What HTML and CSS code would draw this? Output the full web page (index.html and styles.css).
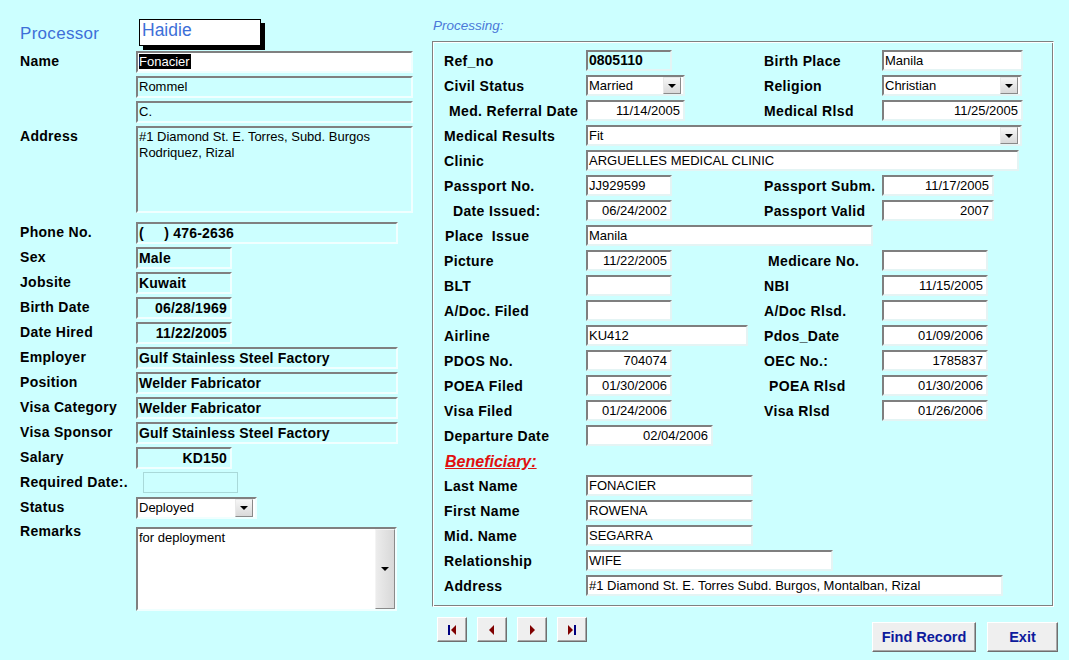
FILE: index.html
```html
<!DOCTYPE html>
<html>
<head>
<meta charset="utf-8">
<title>Processing</title>
<link rel="stylesheet" href="styles.css">
</head>
<body>
<div class="window">
  <div class="left">
    <div class="proc-row">
      <div class="proc-label">Processor</div>
      <div class="proc-box">Haidie</div>
    </div>
    <div class="row"><div class="lbl">Name</div><div class="fld w277 white"><span class="hl">Fonacier</span></div></div>
    <div class="row"><div class="lbl"></div><div class="fld w277">Rommel</div></div>
    <div class="row"><div class="lbl"></div><div class="fld w277">C.</div></div>
    <div class="row addr"><div class="lbl top">Address</div><div class="fld w277 area">#1 Diamond St. E. Torres, Subd. Burgos
Rodriquez, Rizal</div></div>
    <div class="row"><div class="lbl">Phone No.</div><div class="fld w262 b">(     ) 476-2636</div></div>
    <div class="row"><div class="lbl">Sex</div><div class="fld w96 b">Male</div></div>
    <div class="row"><div class="lbl">Jobsite</div><div class="fld w96 b">Kuwait</div></div>
    <div class="row"><div class="lbl">Birth Date</div><div class="fld w96 b r">06/28/1969</div></div>
    <div class="row"><div class="lbl">Date Hired</div><div class="fld w96 b r">11/22/2005</div></div>
    <div class="row"><div class="lbl">Employer</div><div class="fld w262 b">Gulf Stainless Steel Factory</div></div>
    <div class="row"><div class="lbl">Position</div><div class="fld w262 b">Welder Fabricator</div></div>
    <div class="row"><div class="lbl">Visa Category</div><div class="fld w262 b">Welder Fabricator</div></div>
    <div class="row"><div class="lbl">Visa Sponsor</div><div class="fld w262 b">Gulf Stainless Steel Factory</div></div>
    <div class="row"><div class="lbl">Salary</div><div class="fld w96 b r">KD150</div></div>
    <div class="row"><div class="lbl">Required Date:.</div><div class="flat"></div></div>
    <div class="row status"><div class="lbl">Status</div><div class="fld w121 white combo"><span class="ctext">Deployed</span><span class="dd"></span></div></div>
    <div class="row remarks"><div class="lbl top2">Remarks</div><div class="fld w261 white memo"><span class="mtext">for deployment</span><span class="sbtn"></span></div></div>
  </div>

  <div class="right">
    <div class="ptitle">Processing:</div>
    <div class="group">
      <div class="rrow"><div class="rl">Ref_no</div><div class="in w86 cy bold">0805110</div><div class="rl">Birth Place</div><div class="in w141">Manila</div></div>
      <div class="rrow"><div class="rl">Civil Status</div><div class="in w99 combo"><span class="ctext">Married</span><span class="dd"></span></div><div class="rl">Religion</div><div class="in w140 combo"><span class="ctext">Christian</span><span class="dd"></span></div></div>
      <div class="rrow"><div class="rl i5">Med. Referral Date</div><div class="in w99 r">11/14/2005</div><div class="rl">Medical Rlsd</div><div class="in w141 r">11/25/2005</div></div>
      <div class="rrow"><div class="rl">Medical Results</div><div class="in w436 combo span"><span class="ctext">Fit</span><span class="dd"></span></div></div>
      <div class="rrow"><div class="rl">Clinic</div><div class="in w433 span">ARGUELLES MEDICAL CLINIC</div></div>
      <div class="rrow"><div class="rl">Passport No.</div><div class="in w86">JJ929599</div><div class="rl">Passport Subm.</div><div class="in w112 r">11/17/2005</div></div>
      <div class="rrow"><div class="rl i9">Date Issued:</div><div class="in w86 r">06/24/2002</div><div class="rl">Passport Valid</div><div class="in w112 r">2007</div></div>
      <div class="rrow"><div class="rl i1">Place  Issue</div><div class="in w287 span">Manila</div></div>
      <div class="rrow"><div class="rl">Picture</div><div class="in w86 r">11/22/2005</div><div class="rl i4">Medicare No.</div><div class="in w106"></div></div>
      <div class="rrow"><div class="rl">BLT</div><div class="in w86"></div><div class="rl">NBI</div><div class="in w106 r">11/15/2005</div></div>
      <div class="rrow"><div class="rl">A/Doc. Filed</div><div class="in w86"></div><div class="rl">A/Doc Rlsd.</div><div class="in w106"></div></div>
      <div class="rrow"><div class="rl">Airline</div><div class="in w162">KU412</div><div class="rl">Pdos_Date</div><div class="in w106 r">01/09/2006</div></div>
      <div class="rrow"><div class="rl">PDOS No.</div><div class="in w86 r">704074</div><div class="rl">OEC No.:</div><div class="in w106 r">1785837</div></div>
      <div class="rrow"><div class="rl">POEA Filed</div><div class="in w86 r">01/30/2006</div><div class="rl i5">POEA Rlsd</div><div class="in w106 r">01/30/2006</div></div>
      <div class="rrow"><div class="rl">Visa Filed</div><div class="in w86 r">01/24/2006</div><div class="rl">Visa Rlsd</div><div class="in w106 r">01/26/2006</div></div>
      <div class="rrow"><div class="rl">Departure Date</div><div class="in w127 r">02/04/2006</div></div>
      <div class="rrow"><div class="ben">Beneficiary:</div></div>
      <div class="rrow"><div class="rl">Last Name</div><div class="in w167">FONACIER</div></div>
      <div class="rrow"><div class="rl">First Name</div><div class="in w167">ROWENA</div></div>
      <div class="rrow"><div class="rl">Mid. Name</div><div class="in w167">SEGARRA</div></div>
      <div class="rrow"><div class="rl">Relationship</div><div class="in w247 span">WIFE</div></div>
      <div class="rrow"><div class="rl">Address</div><div class="in w417 span">#1 Diamond St. E. Torres Subd. Burgos, Montalban, Rizal</div></div>
    </div>
    <div class="bottom">
      <div class="nav">
        <div class="btn nbtn"><svg width="9" height="10" viewBox="0 0 9 10"><rect x="0" y="0" width="2" height="10" fill="#000080"/><path d="M8 0L3 5L8 10Z" fill="#800000"/></svg></div>
        <div class="btn nbtn"><svg width="6" height="10" viewBox="0 0 6 10"><path d="M5 0L0 5L5 10Z" fill="#800000"/></svg></div>
        <div class="btn nbtn"><svg width="6" height="10" viewBox="0 0 6 10"><path d="M1 0L6 5L1 10Z" fill="#800000"/></svg></div>
        <div class="btn nbtn"><svg width="9" height="10" viewBox="0 0 9 10"><path d="M0 0L5 5L0 10Z" fill="#800000"/><rect x="6" y="0" width="2" height="10" fill="#000080"/></svg></div>
      </div>
      <div class="actions">
        <div class="btn abtn find">Find Record</div>
        <div class="btn abtn exit">Exit</div>
      </div>
    </div>
  </div>
</div>
</body>
</html>
```

FILE: styles.css
```css
* { box-sizing: border-box; }
html, body { margin: 0; padding: 0; }
body {
  background: #ccffff;
  font-family: "Liberation Sans", Arial, sans-serif;
  color: #000;
}
.window {
  width: 1069px;
  height: 660px;
  display: flex;
  background: #ccffff;
  overflow: hidden;
}

/* ---------- left column ---------- */
.left {
  width: 432px;
  flex: none;
  padding: 19px 0 0 20px;
}
.proc-row {
  display: flex;
  align-items: center;
  height: 27px;
  margin-bottom: 5px;
}
.proc-label {
  width: 119px;
  font-size: 17px;
  letter-spacing: 0.3px;
  color: #3d6fd8;
  padding-top: 2px;
}
.proc-box {
  width: 122px;
  height: 27px;
  background: #fff;
  border: 1px solid #000;
  box-shadow: 4px 4px 0 #000;
  color: #3d6fd8;
  font-size: 17.5px;
  line-height: 20px;
  padding-left: 2px;
}
.row {
  display: flex;
  height: 22px;
  margin-bottom: 3px;
}
.row.addr { height: 87px; margin-bottom: 9px; }
.row.status { margin-bottom: 8px; }
.row.remarks { height: 84px; }
.lbl {
  width: 116px;
  flex: none;
  font-weight: bold;
  font-size: 14px;
  letter-spacing: 0.3px;
  line-height: 21px;
  white-space: nowrap;
}
.lbl.top { line-height: 20px; }
.lbl.top2 { line-height: 20px; margin-top: -6px; }

.fld {
  height: 22px;
  border-style: solid;
  border-width: 2px;
  border-color: #808080 #f0ffff #f0ffff #808080;
  background: #ccffff;
  font-size: 13px;
  line-height: 18px;
  padding: 0 2px 0 1px;
  white-space: pre;
  overflow: hidden;
}
.fld.b { font-weight: bold; font-size: 14px; letter-spacing: 0.2px; }
.fld.r { text-align: right; padding-right: 3px; }
.fld.white { background: #fff; }
.fld.area { height: 87px; line-height: 16px; padding-top: 1px; }
.w277 { width: 277px; }
.w262 { width: 262px; }
.w261 { width: 261px; }
.w121 { width: 121px; }
.w96 { width: 96px; }
.hl { background: #000; color: #fff; padding-right: 1px; }
.flat {
  width: 95px;
  height: 21px;
  margin-left: 7px;
  border: 1px solid #a9d9d9;
  background: #ccffff;
}
.combo {
  display: flex;
  align-items: stretch;
}
.ctext { flex: 1; overflow: hidden; }
.dd {
  width: 18px;
  flex: none;
  background: linear-gradient(#f6f6f6, #d9d9d9);
  border: 1px solid;
  border-color: #e8e8e8 #8a8a8a #8a8a8a #e8e8e8;
  display: flex;
  align-items: center;
  justify-content: center;
}
.dd::after {
  content: "";
  border-left: 4px solid transparent;
  border-right: 4px solid transparent;
  border-top: 4px solid #000;
}
.memo {
  height: 84px;
  display: flex;
  padding-right: 0;
  line-height: 17px;
}
.mtext { flex: 1; }
.sbtn {
  width: 20px;
  flex: none;
  background: linear-gradient(90deg, #ececec, #d8d8d8);
  border: 1px solid;
  border-color: #f4f4f4 #8a8a8a #8a8a8a #f4f4f4;
  display: flex;
  align-items: center;
  justify-content: center;
}
.sbtn::after {
  content: "";
  border-left: 4px solid transparent;
  border-right: 4px solid transparent;
  border-top: 4px solid #000;
}

/* ---------- right column ---------- */
.right {
  width: 637px;
  flex: none;
  padding-top: 18px;
}
.ptitle {
  font-style: italic;
  font-size: 13.5px;
  line-height: 16px;
  color: #4a78d8;
  padding-left: 1px;
}
.group {
  margin-top: 7px;
  width: 622px;
  height: 566px;
  border: 1px solid;
  border-color: #808080 #ffffff #ffffff #808080;
  box-shadow: inset 1px 1px 0 #ffffff, inset -1px -1px 0 #808080;
  padding: 6px 0 0 11px;
}
.rrow {
  display: grid;
  grid-template-columns: 142px 178px 118px auto;
  height: 25px;
  align-items: center;
}
.rl {
  font-weight: bold;
  font-size: 14px;
  letter-spacing: 0.35px;
  white-space: pre;
}
.rl.i1 { padding-left: 1px; }
.rl.i4 { padding-left: 4px; }
.rl.i5 { padding-left: 5px; }
.rl.i9 { padding-left: 9px; }
.in {
  height: 21px;
  border-style: solid;
  border-width: 2px;
  border-color: #7f7f7f #e4f4f4 #e4f4f4 #7f7f7f;
  background: #fff;
  font-size: 13px;
  line-height: 17px;
  padding: 0 2px 0 1px;
  white-space: pre;
  overflow: hidden;
}
.in.r { text-align: right; padding-right: 3px; }
.in.cy { background: #ccffff; }
.in.bold { font-weight: bold; font-size: 14px; }
.in.span { grid-column: 2 / 5; }
.w86 { width: 86px; }
.w99 { width: 99px; }
.w106 { width: 106px; }
.w112 { width: 112px; }
.w127 { width: 127px; }
.w140 { width: 140px; }
.w141 { width: 141px; }
.w162 { width: 162px; }
.w167 { width: 167px; }
.w247 { width: 247px; }
.w287 { width: 287px; }
.w417 { width: 417px; }
.w433 { width: 433px; }
.w436 { width: 436px; }
.ben {
  grid-column: 1 / 3;
  color: #e01010;
  font-weight: bold;
  font-style: italic;
  text-decoration: underline;
  font-size: 16px;
  padding-left: 1px;
  padding-top: 3px;
}

.bottom {
  display: flex;
  align-items: flex-start;
  width: 626px;
  margin-top: 10px;
  padding-left: 5px;
}
.nav { display: flex; gap: 10px; }
.btn {
  background: #efefef;
  border: 1px solid;
  border-color: #ffffff #6f6f6f #6f6f6f #ffffff;
  box-shadow: inset -1px -1px 0 #a8a8a8;
  display: flex;
  align-items: center;
  justify-content: center;
}
.nbtn { width: 30px; height: 25px; }
.actions {
  margin-left: auto;
  margin-top: 5px;
  display: flex;
  gap: 11px;
}
.abtn {
  height: 30px;
  font-weight: bold;
  font-size: 14.5px;
  color: #0d1a9c;
}
.find { width: 104px; }
.exit { width: 71px; }
```
